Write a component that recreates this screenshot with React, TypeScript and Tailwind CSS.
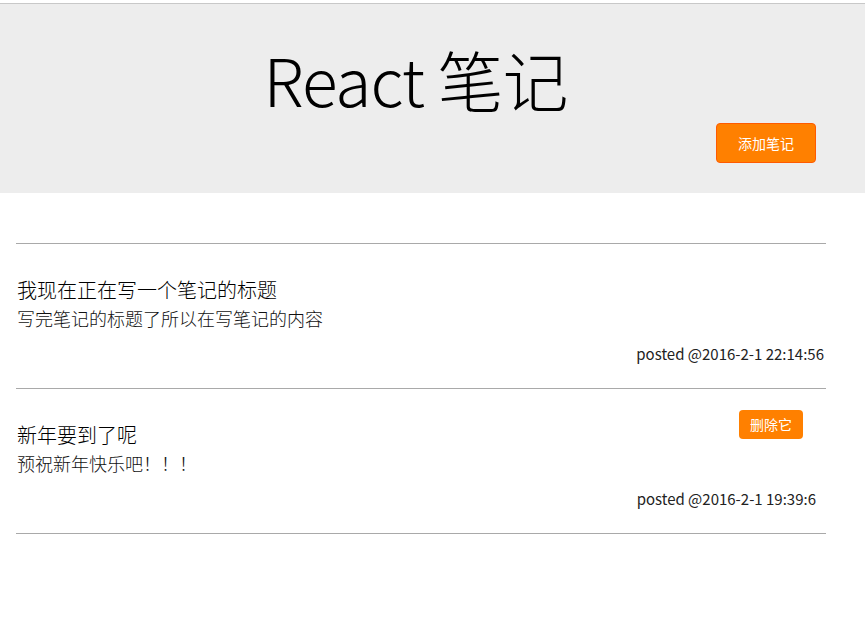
import React from "react";

type Note = {
  title: string;
  content: string;
  time: string;
  showDelete?: boolean;
  timePad?: string;
};

const notes: Note[] = [
  {
    title: "我现在正在写一个笔记的标题",
    content: "写完笔记的标题了所以在写笔记的内容",
    time: "posted @2016-2-1 22:14:56",
  },
  {
    title: "新年要到了呢",
    content: "预祝新年快乐吧！！！",
    time: "posted @2016-2-1 19:39:6",
    showDelete: true,
    timePad: "pr-[10px]",
  },
];

const NoteItem = ({ title, content, time, showDelete, timePad }: Note) => {
  return (
    <div className="relative border-b border-[#a9a9a9] h-[145px] pt-[33px]">
      {showDelete && (
        <button
          type="button"
          className="absolute right-[23px] top-[21px] w-[64px] h-[29px] rounded-[4px] bg-[#ff8000] text-white text-[14px]"
        >
          删除它
        </button>
      )}
      <h2 className="text-[20px] leading-[26px] text-black ml-px font-light">{title}</h2>
      <p className="text-[18px] leading-[24px] text-[#111] ml-px mt-[3px] font-light">{content}</p>
      <div className={`text-right text-[15px] leading-[20px] text-[#222] mt-[14px] pr-[2px] ${timePad ?? ""}`}>
        {time}
      </div>
    </div>
  );
};

export default function App() {
  return (
    <div
      className="min-h-[619px] bg-white"
      style={{ fontFamily: '"Noto Sans CJK SC", "Noto Sans", sans-serif' }}
    >
      <div className="h-[4px] bg-white border-b border-[#c8c8c8]" />
      <div className="relative h-[189px] bg-[#ededed]">
        <h1 className="text-center text-[66px] leading-none font-light text-black pt-[41px] pr-[34px] tracking-[-1px]">
          React 笔记
        </h1>
        <button
          type="button"
          className="absolute left-[716px] top-[119px] w-[100px] h-[40px] rounded-[4px] bg-[#ff8000] border border-[#ff5a00] text-white text-[14px]"
        >
          添加笔记
        </button>
      </div>
      <div className="ml-4 w-[810px] pt-[50px]">
        <div className="border-t border-[#a9a9a9]">
          {notes.map((n) => (
            <NoteItem key={n.time} {...n} />
          ))}
        </div>
      </div>
    </div>
  );
}
